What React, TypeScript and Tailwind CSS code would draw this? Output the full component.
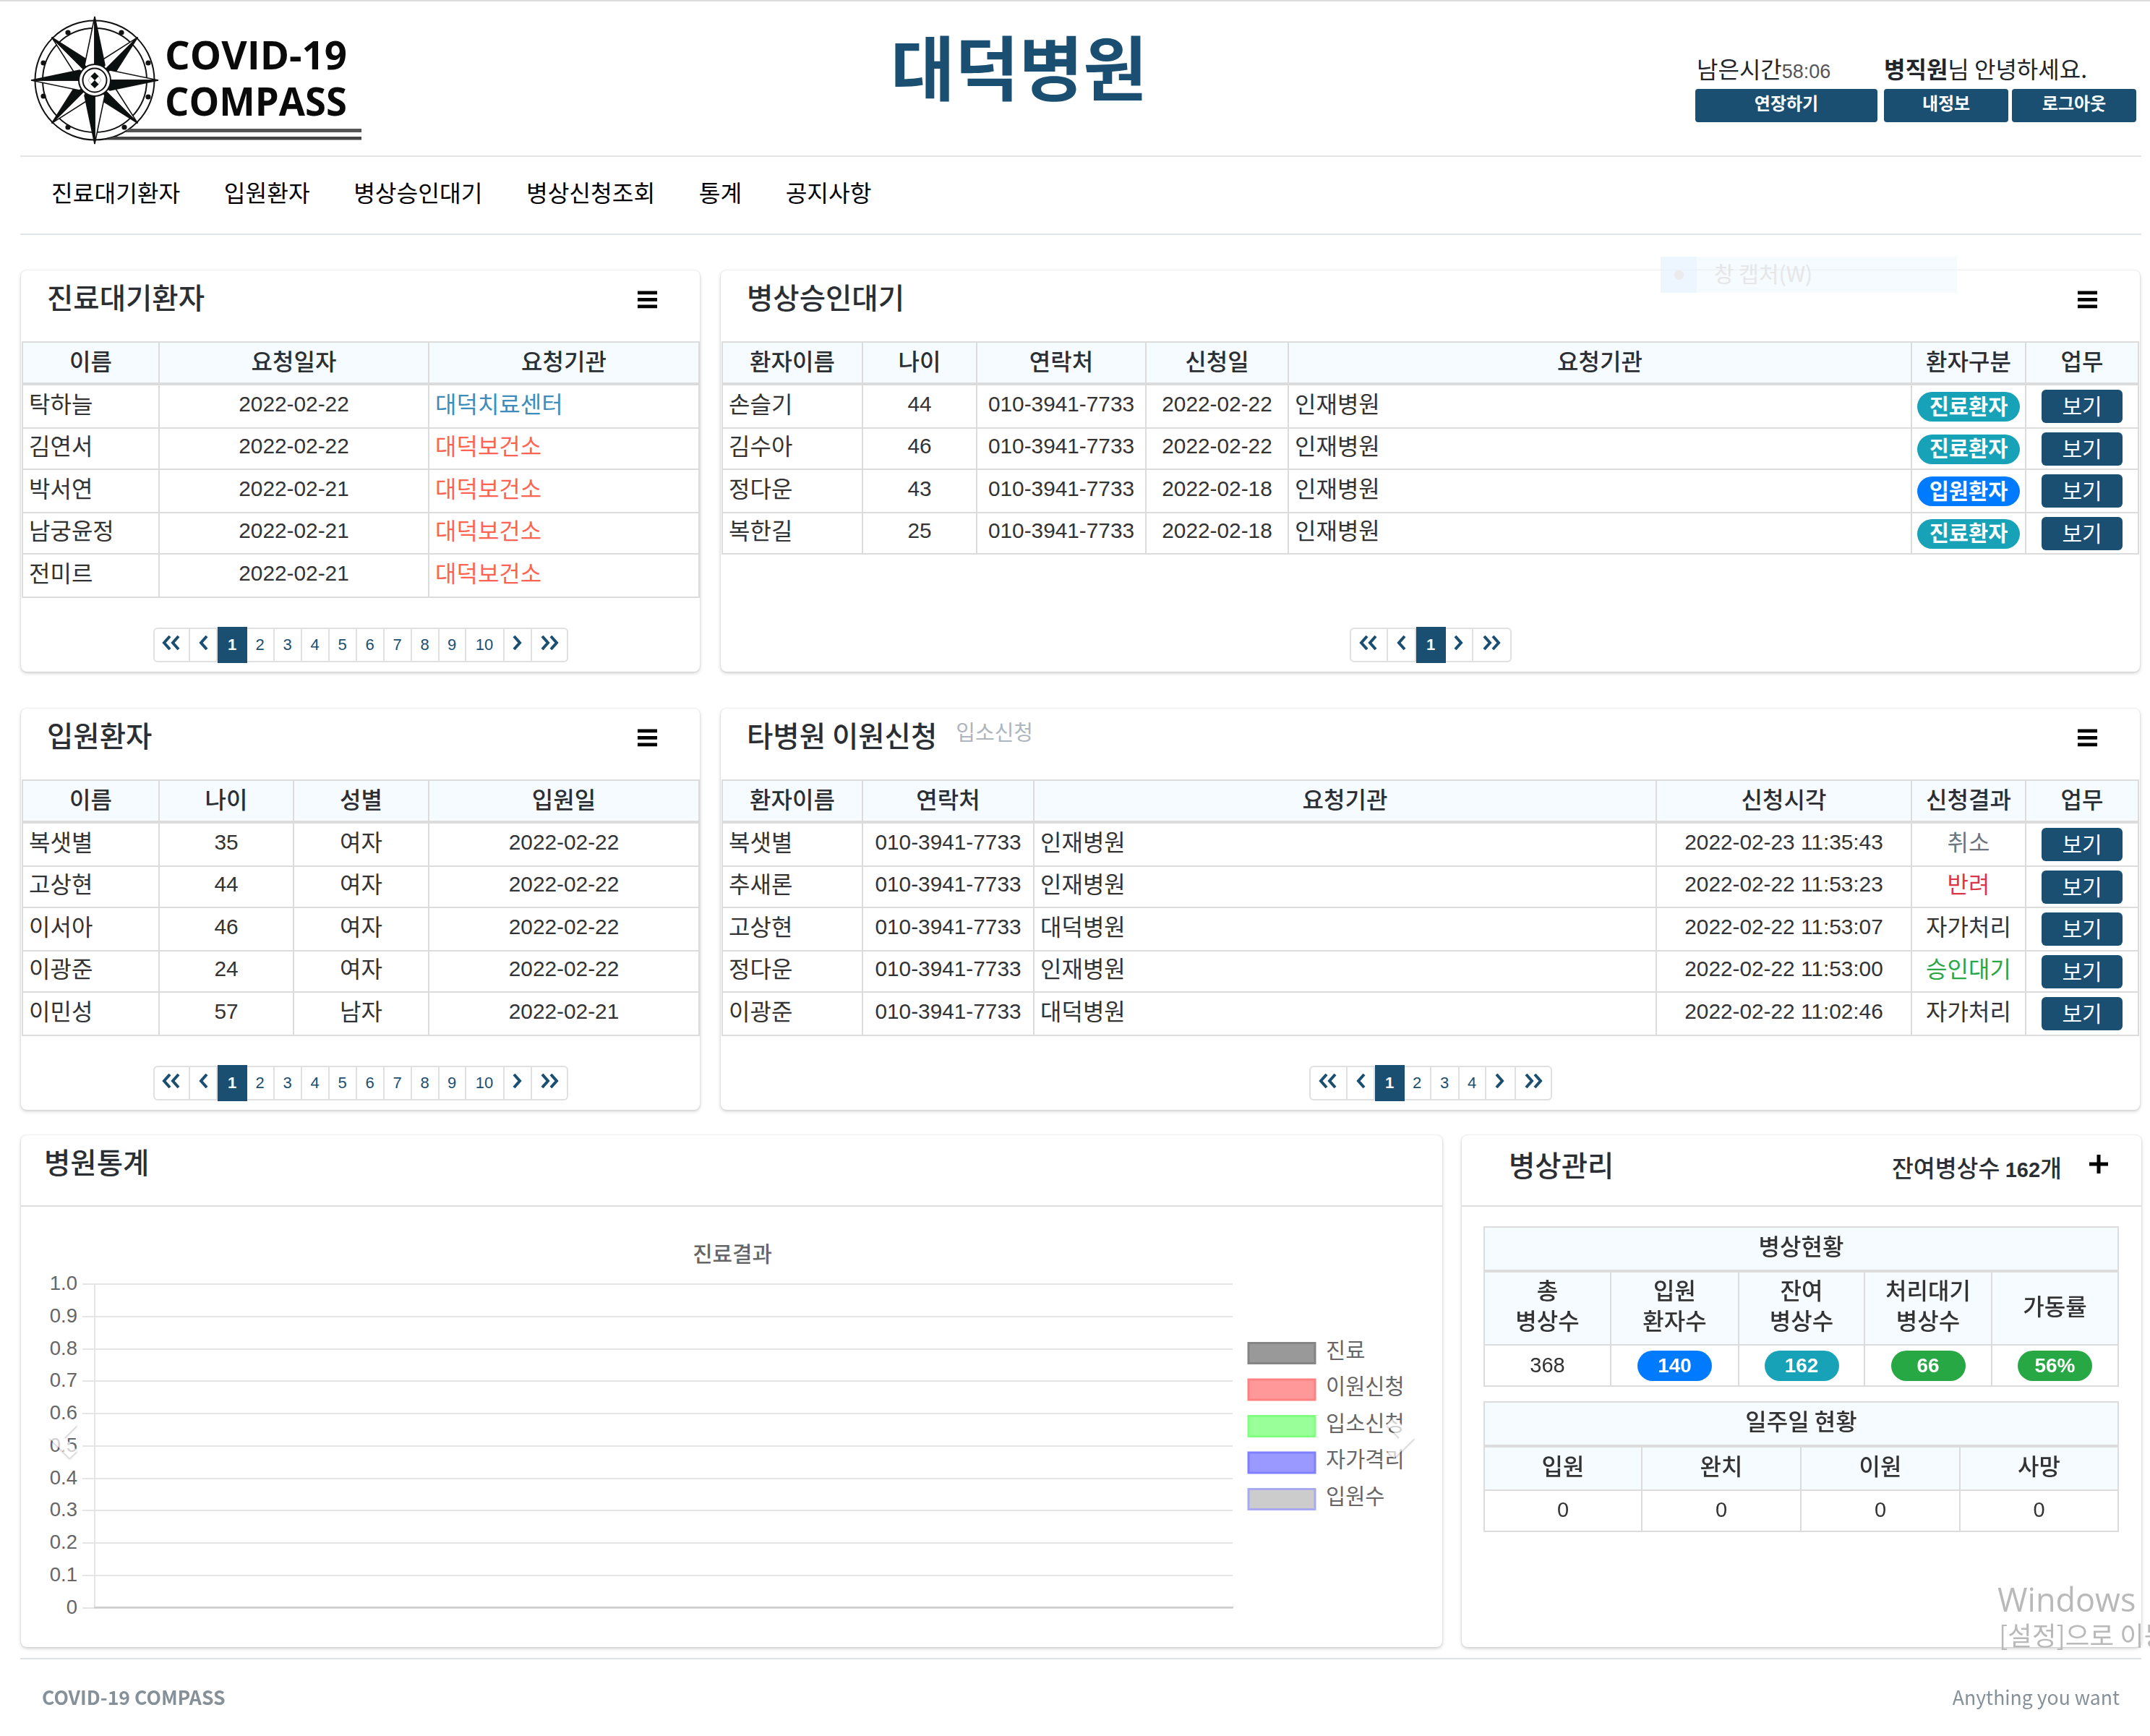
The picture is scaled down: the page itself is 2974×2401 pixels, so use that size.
import type { ReactNode } from 'react';

const KR = "font-['Noto_Sans_CJK_KR',sans-serif]";
const NUM = "font-['Liberation_Sans','Noto_Sans_CJK_KR',sans-serif]";

const cardinal = [0, 90, 180, 270];
const studs = [
  [-37, -66], [37, -66], [-71, -24], [74, -24], [-71, 22], [74, 23], [-37, 65], [41, 65],
];

function Logo() {
  return (
    <svg className="block h-[190px] w-[470px]" viewBox="0 0 470 190">
      <g transform="translate(91 93)" stroke="#111" strokeWidth="1.6" fill="#fff">
        <circle r="82.5" fill="none" strokeWidth="2" />
        <circle r="72" fill="none" strokeWidth="2" />
        {studs.map(([x, y]) => (
          <circle key={`${x}${y}`} cx={x} cy={y} r="3.6" fill="#111" stroke="none" />
        ))}
        {cardinal.map((a) => (
          <g key={a} transform={`rotate(${a + 45})`}>
            <path d="M0 -84 L-13 -25 L0 0 Z" />
            <path d="M0 -84 L13 -25 L0 0 Z" fill="#0a0f10" />
          </g>
        ))}
        {cardinal.map((a) => (
          <g key={a} transform={`rotate(${a})`}>
            <path d="M0 -88 L-14 -21 L0 0 Z" />
            <path d="M0 -88 L14 -21 L0 0 Z" fill="#0a0f10" />
          </g>
        ))}
        <circle r="22" strokeWidth="2" />
        <circle r="16.5" strokeWidth="2" />
        <path d="M-9 0 L-4 -7 L0 0 L-4 7 Z M9 0 L4 -7 L0 0 L4 7 Z" stroke="#bbb" strokeWidth="1" />
        <path d="M0 -11 L5.5 -5.5 L0 0 L-5.5 -5.5 Z M0 0 L5.5 5.5 L0 11 L-5.5 5.5 Z" fill="#0a0f10" stroke="none" />
      </g>
      <g fill="#0a0a0a" fontFamily="'Open Sans', sans-serif" fontWeight="700" fontSize="53">
        <text x="188" y="78" textLength="252" lengthAdjust="spacingAndGlyphs">COVID-19</text>
        <text x="188" y="142" textLength="252" lengthAdjust="spacingAndGlyphs">COMPASS</text>
      </g>
      <path d="M138 160 H460 V165 H133 Z" fill="#555" />
      <path d="M117 171 H460 V175.500 H105 Z" fill="#444" />
    </svg>
  );
}

function HeaderButton({ className, children }: { className: string; children: ReactNode }) {
  return (
    <div className={`flex h-[46px] items-center justify-center rounded-[4px] bg-[#1b4f72] pb-[8px] text-[24px] leading-none font-bold text-white ${className}`}>
      {children}
    </div>
  );
}

function Header() {
  return (
    <header className="flex h-[215px] border-b-2 border-[#e1e4e9]">
      <div className="w-[1204px] pt-[16px] pl-[12px]"><Logo /></div>
      <h1 className="mt-[37px] text-[96.500px] leading-[100px] font-bold text-[#1b4f72]">대덕병원</h1>
      <div className="ml-auto flex justify-end gap-[9px] pt-[78px] pr-[7px] text-[32px] leading-[36px] text-[#212529]">
        <div className="w-[252px]">
          <div className="flex h-[43px] items-baseline pl-[2px]">
            <span className="-mt-[4px]">남은시간</span>
            <span className={`${NUM} text-[27px] text-[#555]`}>58:06</span>
          </div>
          <HeaderButton className="w-[252px]">연장하기</HeaderButton>
        </div>
        <div>
          <div className="-mt-[4px] h-[47px]"><b>병직원</b>님 안녕하세요.</div>
          <div className="flex gap-[5px]">
            <HeaderButton className="w-[172px]">내정보</HeaderButton>
            <HeaderButton className="w-[172px]">로그아웃</HeaderButton>
          </div>
        </div>
      </div>
    </header>
  );
}

const menu = ['진료대기환자', '입원환자', '병상승인대기', '병상신청조회', '통계', '공지사항'];

function MenuIcon() {
  return (
    <svg className="mt-[28px] h-[25px] w-[27px]" viewBox="0 0 27 25">
      <path d="M0 0.500h27v4.700h-27zM0 10h27v4.700h-27zM0 19.500h27v4.700h-27z" fill="#000" />
    </svg>
  );
}

function Card({ className, children }: { className: string; children: ReactNode }) {
  return (
    <section className={`rounded-[8px] bg-white shadow-[0_0_2px_rgba(0,0,0,0.125),0_2px_5px_rgba(0,0,0,0.2)] ${className}`}>
      {children}
    </section>
  );
}

function ListCard({ title, sub, className, children }: { title: string; sub?: string; className: string; children: ReactNode }) {
  return (
    <Card className={`flex h-[555px] flex-col ${className}`}>
      <div className="flex h-[98px] shrink-0 items-start pr-[59px] pl-[36px]">
        <h2 className="pt-[10px] text-[39.500px] leading-[52px] font-medium whitespace-pre text-[#2b2f33]">{title}</h2>
        {sub && <span className="pt-[13px] pl-[26px] text-[29px] leading-[36px] text-[#adb5bd]">{sub}</span>}
        <div className="ml-auto"><MenuIcon /></div>
      </div>
      {children}
    </Card>
  );
}

type Kind = 'name' | 'text' | 'num' | 'mid' | 'act';
const kinds: Record<Kind, string> = {
  name: `${KR} text-[32px] pl-[8px] text-left pb-[11px]`,
  text: `${KR} text-[32px] pl-[8px] text-left pb-[11px]`,
  mid: `${KR} text-[32px] text-center pb-[11px]`,
  num: `${NUM} text-[29.800px] text-center pb-[7px]`,
  act: 'text-center',
};
const rowHeights = [61, 57, 60, 57, 60];

function DataTable({ cols, rows }: { cols: { w: number; head: string; kind: Kind }[]; rows: ReactNode[][] }) {
  const total = cols.reduce((s, c) => s + c.w, 2);
  return (
    <table className="ml-px table-fixed border-collapse leading-[36px] text-[#333]" style={{ width: total }}>
      <colgroup>{cols.map((c, i) => <col key={i} style={{ width: c.w }} />)}</colgroup>
      <thead>
        <tr className="h-[58px] bg-[#f5fbfe]">
          {cols.map((c, i) => (
            <th key={i} className="border-2 border-b-4 border-[#dcdcdc] p-0 pb-[8px] text-[32px] font-medium text-[#2b2f33]">{c.head}</th>
          ))}
        </tr>
      </thead>
      <tbody>
        {rows.map((r, i) => (
          <tr key={i} style={{ height: rowHeights[i] }}>
            {r.map((v, j) => (
              <td key={j} className={`border-2 border-[#dcdcdc] p-0 whitespace-nowrap ${kinds[cols[j].kind]}`}>{v}</td>
            ))}
          </tr>
        ))}
      </tbody>
    </table>
  );
}

const arrowPaths: Record<string, string> = {
  '«': 'M11 1 L3 10 L11 19 M23 1 L15 10 L23 19',
  '‹': 'M18 1 L10 10 L18 19',
  '›': 'M8 1 L16 10 L8 19',
  '»': 'M3 1 L11 10 L3 19 M15 1 L23 10 L15 19',
};

function Pager({ items, widths }: { items: string[]; widths: number[] }) {
  return (
    <div className={`mx-auto mt-auto mb-[12px] flex h-[50px] items-center ${NUM}`}>
      {items.map((t, i) => {
        const active = t === '1';
        const first = i === 0;
        const last = i === items.length - 1;
        return (
          <div
            key={t}
            style={{ width: widths[i] }}
            className={`flex items-center justify-center text-[22px] leading-none ${
              active
                ? 'h-[50px] bg-[#1b4f72] font-bold text-white'
                : `h-[48px] border-y-2 border-r-2 border-[#dee0e2] text-[#1b4f72] ${first ? 'rounded-l-[6px] border-l-2' : ''} ${last ? 'rounded-r-[6px]' : ''}`
            }`}
          >
            {arrowPaths[t] ? (
              <svg className="mb-[6px] h-[20px] w-[26px] shrink-0" viewBox="0 0 26 20">
                <path d={arrowPaths[t]} fill="none" stroke="#1b4f72" strokeWidth="4" />
              </svg>
            ) : (
              <span>{t}</span>
            )}
          </div>
        );
      })}
    </div>
  );
}

const tenPages = ['«', '‹', '1', '2', '3', '4', '5', '6', '7', '8', '9', '10', '›', '»'];
const tenWidths = [51, 38, 41, 38, 38, 38, 38, 38, 38, 38, 37, 53, 38, 50];

function Badge({ blue, children }: { blue?: boolean; children: ReactNode }) {
  return (
    <div className={`mx-auto mt-px flex h-[41px] w-[142px] items-center justify-center rounded-full pb-[4px] text-[29.500px] leading-none font-bold text-white ${blue ? 'bg-[#007bff]' : 'bg-[#17a2b8]'}`}>
      {children}
    </div>
  );
}

function ViewButton() {
  return (
    <div className="mx-auto flex h-[46px] w-[112px] items-center justify-center rounded-[6px] bg-[#1b4f72] pb-[4px] text-[30px] leading-none text-white">
      보기
    </div>
  );
}

const center = <span className="text-[#3c8dbc]">대덕치료센터</span>;
const clinic = <span className="text-[#ff6352]">대덕보건소</span>;
const phone = '010-3941-7733';

const yTicks = ['1.0', '0.9', '0.8', '0.7', '0.6', '0.5', '0.4', '0.3', '0.2', '0.1', '0'];
const legend = [
  { label: '진료', fill: '#999999', stroke: '#858585' },
  { label: '이원신청', fill: '#ff9999', stroke: '#ff8080' },
  { label: '입소신청', fill: '#99ff99', stroke: '#80ff80' },
  { label: '자가격리', fill: '#9999ff', stroke: '#8080ff' },
  { label: '입원수', fill: '#cccccc', stroke: '#a9a9f0' },
];

function Chart() {
  return (
    <svg className="block h-[606px] w-[1966px]" viewBox="0 0 1966 606" fontFamily="'Noto Sans CJK KR', sans-serif" fill="#666">
      <text x="984" y="76" fontSize="29.800" fontWeight="500" textAnchor="middle">진료결과</text>
      {yTicks.map((t, i) => {
        const y = 107 + i * 44.75;
        return (
          <g key={t}>
            <rect x="85" y={Math.round(y) - 1} width="1591" height="2" fill="#e5e5e5" />
            <text x="78" y={y + 8} fontSize="27.500" textAnchor="end" fontFamily="'Liberation Sans', sans-serif">{t}</text>
          </g>
        );
      })}
      <rect x="101" y="106" width="2" height="450" fill="#e5e5e5" />
      <rect x="101" y="553" width="1576" height="2.500" fill="#cfcfcf" />
      {legend.map((l, i) => {
        const y = 188.5 + i * 50.5;
        return (
          <g key={l.label}>
            <rect x="1698" y={y} width="92" height="28" fill={l.fill} stroke={l.stroke} strokeWidth="3" />
            <text x="1805" y={y + 20} fontSize="29.500">{l.label}</text>
          </g>
        );
      })}
      <g fill="#fff" className="opacity-70 drop-shadow-[0_2px_1px_rgba(0,0,0,0.3)]">
        <path transform="translate(30 291) scale(7.1)" d="M5.25 0l-4 4 4 4 1.5-1.5L4.25 4l2.5-2.5L5.25 0z" />
        <path transform="translate(1880 291) scale(7.1)" d="M2.75 0l-1.5 1.5L3.75 4l-2.5 2.500L2.750 8l4-4-4-4z" />
      </g>
    </svg>
  );
}

function Pill({ className, children }: { className: string; children: ReactNode }) {
  return (
    <div className={`mx-auto flex h-[42px] w-[103px] items-center justify-center rounded-full text-[28px] leading-none font-bold text-white ${NUM} ${className}`}>
      {children}
    </div>
  );
}

const cell = 'border-2 border-[#dcdcdc] p-0 font-medium';

function BedTables() {
  return (
    <div className="pt-[27px] pl-[30px] leading-[42px] text-[#333]">
      <table className="w-[879px] table-fixed border-collapse text-center text-[32px]">
        <colgroup>
          <col className="w-[175px]" /><col className="w-[177px]" /><col className="w-[174px]" /><col className="w-[176px]" /><col className="w-[175px]" />
        </colgroup>
        <tbody>
          <tr className="h-[61px] bg-[#f5fbfe]"><th colSpan={5} className={`${cell} border-b-4 pb-[10px]`}>병상현황</th></tr>
          <tr className="h-[102px] bg-[#f5fbfe]">
            <th className={`${cell} pb-[11px]`}>총<br />병상수</th>
            <th className={`${cell} pb-[11px]`}>입원<br />환자수</th>
            <th className={`${cell} pb-[11px]`}>잔여<br />병상수</th>
            <th className={`${cell} pb-[11px]`}>처리대기<br />병상수</th>
            <th className={`${cell} pb-[10px]`}>가동률</th>
          </tr>
          <tr className="h-[57px]">
            <td className={`border-2 border-[#dcdcdc] p-0 pb-[2px] text-[29px] ${NUM}`}>368</td>
            <td className="border-2 border-[#dcdcdc] p-0"><Pill className="bg-[#007bff]">140</Pill></td>
            <td className="border-2 border-[#dcdcdc] p-0"><Pill className="bg-[#17a2b8]">162</Pill></td>
            <td className="border-2 border-[#dcdcdc] p-0"><Pill className="bg-[#28a745]">66</Pill></td>
            <td className="border-2 border-[#dcdcdc] p-0"><Pill className="bg-[#28a745]">56%</Pill></td>
          </tr>
        </tbody>
      </table>
      <table className="mt-[20px] w-[879px] table-fixed border-collapse text-center text-[32px]">
        <colgroup>
          <col className="w-[218px]" /><col className="w-[220px]" /><col className="w-[220px]" /><col className="w-[219px]" />
        </colgroup>
        <tbody>
          <tr className="h-[61px] bg-[#f5fbfe]"><th colSpan={4} className={`${cell} border-b-4 pb-[11px]`}>일주일 현황</th></tr>
          <tr className="h-[61px] bg-[#f5fbfe]">
            {['입원', '완치', '이원', '사망'].map((t) => <th key={t} className={`${cell} pb-[10px]`}>{t}</th>)}
          </tr>
          <tr className="h-[57px]">
            {[0, 1, 2, 3].map((t) => <td key={t} className={`border-2 border-[#dcdcdc] p-0 pb-[3px] text-[29px] ${NUM}`}>0</td>)}
          </tr>
        </tbody>
      </table>
    </div>
  );
}

export default function App() {
  return (
    <div className={`relative h-[2401px] w-[2974px] overflow-hidden border-t-2 border-[#dcdcdc] bg-white ${KR}`}>
      <div className="mx-[28px] w-[2934px]">
        <Header />
        <nav className="flex h-[108px] items-center gap-[60.500px] border-b-2 border-[#e1e4e9] pb-[11px] pl-[43px] text-[32.300px] leading-[40px] text-black">
          {menu.map((m) => <span key={m}>{m}</span>)}
        </nav>
      </div>

      <main className="ml-[29px] flex w-[2933px] flex-col pt-[49px]">
        <div className="flex gap-[29px]">
          <ListCard title="진료대기환자" className="w-[939px]">
            <DataTable
              cols={[{ w: 189, head: '이름', kind: 'name' }, { w: 373, head: '요청일자', kind: 'num' }, { w: 374, head: '요청기관', kind: 'text' }]}
              rows={[
                ['탁하늘', '2022-02-22', center],
                ['김연서', '2022-02-22', clinic],
                ['박서연', '2022-02-21', clinic],
                ['남궁윤정', '2022-02-21', clinic],
                ['전미르', '2022-02-21', clinic],
              ]}
            />
            <Pager items={tenPages} widths={tenWidths} />
          </ListCard>
          <ListCard title="병상승인대기" className="w-[1963px]">
            <DataTable
              cols={[
                { w: 194, head: '환자이름', kind: 'name' }, { w: 158, head: '나이', kind: 'num' }, { w: 234, head: '연락처', kind: 'num' },
                { w: 197, head: '신청일', kind: 'num' }, { w: 862, head: '요청기관', kind: 'text' }, { w: 158, head: '환자구분', kind: 'act' }, { w: 156, head: '업무', kind: 'act' },
              ]}
              rows={[
                ['손슬기', '44', phone, '2022-02-22', '인재병원', <Badge>진료환자</Badge>, <ViewButton />],
                ['김수아', '46', phone, '2022-02-22', '인재병원', <Badge>진료환자</Badge>, <ViewButton />],
                ['정다운', '43', phone, '2022-02-18', '인재병원', <Badge blue>입원환자</Badge>, <ViewButton />],
                ['복한길', '25', phone, '2022-02-18', '인재병원', <Badge>진료환자</Badge>, <ViewButton />],
              ]}
            />
            <Pager items={['«', '‹', '1', '›', '»']} widths={[53, 39, 41, 38, 53]} />
          </ListCard>
        </div>

        <div className="mt-[51px] flex gap-[29px]">
          <ListCard title="입원환자" className="w-[939px]">
            <DataTable
              cols={[{ w: 189, head: '이름', kind: 'name' }, { w: 186, head: '나이', kind: 'num' }, { w: 187, head: '성별', kind: 'mid' }, { w: 374, head: '입원일', kind: 'num' }]}
              rows={[
                ['복샛별', '35', '여자', '2022-02-22'],
                ['고상현', '44', '여자', '2022-02-22'],
                ['이서아', '46', '여자', '2022-02-22'],
                ['이광준', '24', '여자', '2022-02-22'],
                ['이민성', '57', '남자', '2022-02-21'],
              ]}
            />
            <Pager items={tenPages} widths={tenWidths} />
          </ListCard>
          <ListCard title="타병원 이원신청" sub="입소신청" className="w-[1963px]">
            <DataTable
              cols={[
                { w: 194, head: '환자이름', kind: 'name' }, { w: 237, head: '연락처', kind: 'num' }, { w: 861, head: '요청기관', kind: 'text' },
                { w: 353, head: '신청시각', kind: 'num' }, { w: 158, head: '신청결과', kind: 'mid' }, { w: 156, head: '업무', kind: 'act' },
              ]}
              rows={[
                ['복샛별', phone, '인재병원', '2022-02-23 11:35:43', <span className="text-[#6c757d]">취소</span>, <ViewButton />],
                ['추새론', phone, '인재병원', '2022-02-22 11:53:23', <span className="text-[#dc3545]">반려</span>, <ViewButton />],
                ['고상현', phone, '대덕병원', '2022-02-22 11:53:07', '자가처리', <ViewButton />],
                ['정다운', phone, '인재병원', '2022-02-22 11:53:00', <span className="text-[#28a745]">승인대기</span>, <ViewButton />],
                ['이광준', phone, '대덕병원', '2022-02-22 11:02:46', '자가처리', <ViewButton />],
              ]}
            />
            <Pager items={['«', '‹', '1', '2', '3', '4', '›', '»']} widths={[53, 38, 41, 37, 39, 37, 41, 50]} />
          </ListCard>
        </div>

        <div className="mt-[35px] flex gap-[27px]">
          <Card className="h-[708px] w-[1966px]">
            <div className="h-[99px] border-b-2 border-[#dfdfdf] pt-[10px] pl-[32px] text-[39.500px] leading-[52px] font-medium text-[#2b2f33]">병원통계</div>
            <Chart />
          </Card>
          <Card className="h-[708px] w-[940px]">
            <div className="flex h-[99px] border-b-2 border-[#dfdfdf] pr-[46px] pl-[65px] text-[#2b2f33]">
              <h2 className="pt-[14px] text-[39.500px] leading-[52px] font-medium">병상관리</h2>
              <div className="ml-auto pt-[22px] text-[32.500px] leading-[44px] font-medium">
                잔여병상수 <span className={`${NUM} text-[29px] font-bold`}>162</span>개
              </div>
              <svg className="mt-[27px] ml-[38px] h-[26px] w-[26px]" viewBox="0 0 26 26">
                <path d="M13 0V26M0 13H26" stroke="#000" strokeWidth="5" />
              </svg>
            </div>
            <BedTables />
          </Card>
        </div>
      </main>

      <footer className="mx-[28px] mt-[15px] flex w-[2934px] justify-between border-t-2 border-[#dee2e6] pt-[30px] pr-[30px] pl-[30px] text-[26.600px] leading-[44px] text-[#869099]">
        <b>COVID-19 COMPASS</b>
        <span>Anything you want</span>
      </footer>

      <div className="absolute top-[353px] left-[2297px] flex h-[50px] w-[410px] items-center bg-[#e5f5ff]/40 text-[30px] text-[#e6e6e6]">
        <div className="flex h-full w-[50px] items-center justify-center bg-[#e5f0ff]/50">
          <span className="h-[13px] w-[13px] rounded-full bg-[#ebebeb]" />
        </div>
        <span className="pb-[6px] pl-[24px]">창 캡처(W)</span>
      </div>

      <div className="absolute top-[2182px] left-[2763px] whitespace-nowrap text-[#b9b9b9]">
        <div className="font-['Open_Sans',sans-serif] text-[45px] leading-[56px]">Windows</div>
        <div className="-mt-[3px] pl-[2px] text-[36.500px] leading-[48px]">[설정]으로 이동</div>
      </div>
    </div>
  );
}
